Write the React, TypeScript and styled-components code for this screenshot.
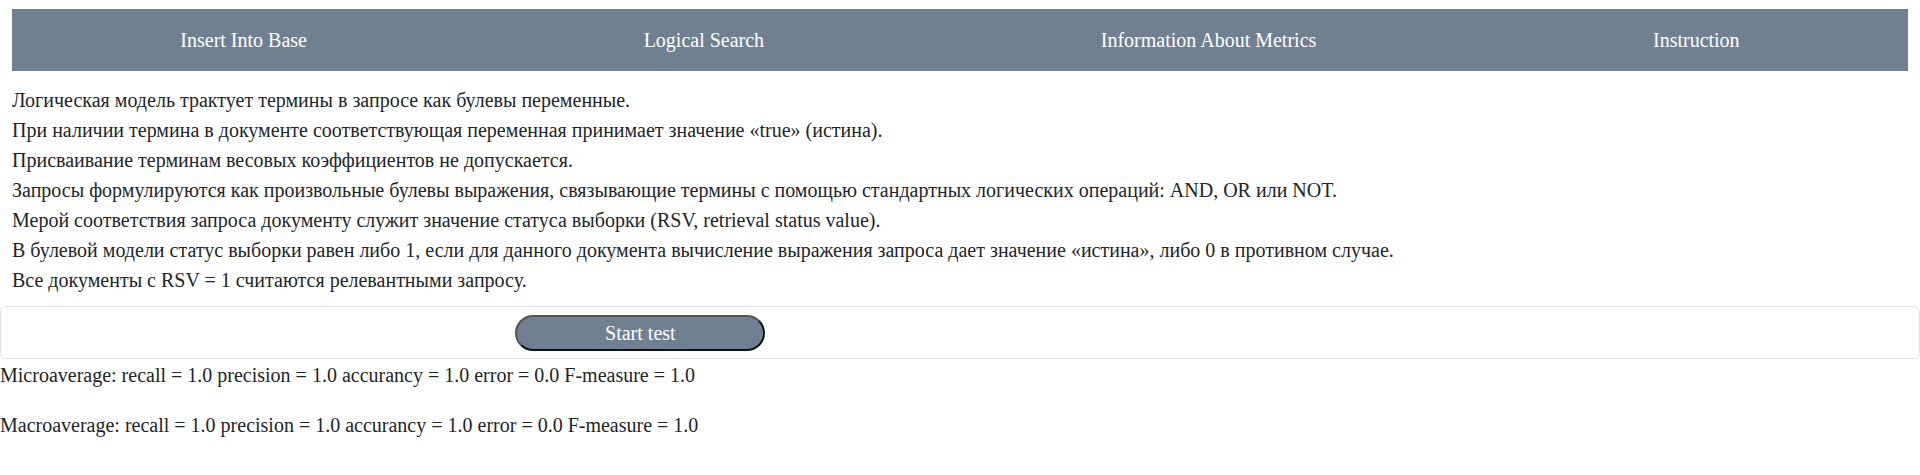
import React from "react";
import styled, { createGlobalStyle } from "styled-components";

const GlobalStyle = createGlobalStyle`
  body {
    margin: 0;
    font-family: "Liberation Serif", "Times New Roman", serif;
    color: #212529;
    background: #fff;
  }
`;

const Page = styled.div`
  display: flex;
  flex-direction: column;
`;

const Top = styled.div`
  padding: 9px 12px 0 12px;
`;

const NavBar = styled.nav`
  display: flex;
  justify-content: space-around;
  align-items: center;
  height: 62px;
  background: #708090;
`;

const NavLink = styled.a`
  color: #fff;
  font-size: 20px;
  text-decoration: none;
  cursor: pointer;
`;

const Description = styled.div`
  margin-top: 14px;
`;

const Line = styled.div`
  font-size: 20px;
  line-height: 30px;
`;

const TestPanel = styled.form`
  display: grid;
  grid-template-columns: 2fr 1fr;
  margin-top: 11px;
  padding: 8px 0 7px 0;
  border: 1px solid #dee2e6;
  border-radius: 6px;
`;

const ButtonCell = styled.div`
  display: flex;
  justify-content: center;
`;

const StartButton = styled.button`
  width: 250px;
  height: 36px;
  border-radius: 18px;
  border: 2px solid;
  border-color: #555 #111 #111 #555;
  background: #708090;
  color: #fff;
  font-family: "Liberation Serif", "Times New Roman", serif;
  font-size: 20px;
  cursor: pointer;
`;

const Results = styled.div`
  display: flex;
  flex-direction: column;
  gap: 20px;
  margin-top: 1px;
`;

const ResultLine = styled.div`
  font-size: 20px;
  line-height: 30px;
`;

const navItems = [
  "Insert Into Base",
  "Logical Search",
  "Information About Metrics",
  "Instruction",
];

const lines = [
  "Логическая модель трактует термины в запросе как булевы переменные.",
  "При наличии термина в документе соответствующая переменная принимает значение «true» (истина).",
  "Присваивание терминам весовых коэффициентов не допускается.",
  "Запросы формулируются как произвольные булевы выражения, связывающие термины с помощью стандартных логических операций: AND, OR или NOT.",
  "Мерой соответствия запроса документу служит значение статуса выборки (RSV, retrieval status value).",
  "В булевой модели статус выборки равен либо 1, если для данного документа вычисление выражения запроса дает значение «истина», либо 0 в противном случае.",
  "Все документы с RSV = 1 считаются релевантными запросу.",
];

const metrics = { recall: "1.0", precision: "1.0", accurancy: "1.0", error: "0.0", f: "1.0" };

const formatMetrics = (label: string) =>
  `${label}: recall = ${metrics.recall} precision = ${metrics.precision} accurancy = ${metrics.accurancy} error = ${metrics.error} F-measure = ${metrics.f}`;

export default function App() {
  return (
    <Page>
      <GlobalStyle />
      <Top>
        <NavBar>
          {navItems.map((item) => (
            <NavLink key={item}>{item}</NavLink>
          ))}
        </NavBar>
        <Description>
          {lines.map((line) => (
            <Line key={line}>{line}</Line>
          ))}
        </Description>
      </Top>
      <TestPanel onSubmit={(e) => e.preventDefault()}>
        <ButtonCell>
          <StartButton type="submit">Start test</StartButton>
        </ButtonCell>
      </TestPanel>
      <Results>
        <ResultLine>{formatMetrics("Microaverage")}</ResultLine>
        <ResultLine>{formatMetrics("Macroaverage")}</ResultLine>
      </Results>
    </Page>
  );
}
